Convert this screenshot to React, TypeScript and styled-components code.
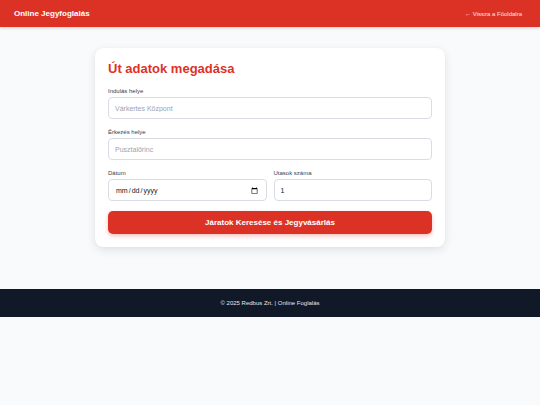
import React, { FC } from 'react';
import styled, { createGlobalStyle } from 'styled-components';

const GlobalStyle = createGlobalStyle`
  * { box-sizing: border-box; }
  body {
    margin: 0;
    background: #f9fafb;
    font-family: "Liberation Sans", Arial, sans-serif;
    color: #1f2937;
  }
`;

const RED = '#dc3226';

const Header = styled.header`
  height: 27px;
  background: ${RED};
  display: flex;
  align-items: center;
  justify-content: space-between;
  padding: 0 18px 0 14px;
  box-shadow: 0 1px 3px rgba(0, 0, 0, 0.18);
`;

const Brand = styled.div`
  color: #fff;
  font-weight: 700;
  font-size: 8px;
`;

const BackLink = styled.a`
  color: #fde2e0;
  font-size: 6px;
  text-decoration: none;
`;

const Main = styled.main`
  padding: 21px 0 42px;
`;

const Card = styled.section`
  width: 350px;
  margin: 0 auto;
  background: #fff;
  border-radius: 8px;
  padding: 13px;
  box-shadow: 0 3px 10px rgba(0, 0, 0, 0.1), 0 0 1px rgba(0, 0, 0, 0.08);
`;

const Title = styled.h1`
  margin: 0 0 11px;
  color: ${RED};
  font-size: 13px;
  line-height: 16px;
  font-weight: 700;
`;

const Field = styled.div`
  margin-bottom: 10px;
`;

const Row = styled.div`
  display: grid;
  grid-template-columns: 1fr 1fr;
  gap: 7px;
  margin-bottom: 10px;
`;

const Label = styled.label`
  display: block;
  font-size: 6px;
  line-height: 7px;
  color: #374151;
  margin-bottom: 2px;
`;

const Input = styled.input`
  display: block;
  width: 100%;
  height: 22px;
  border: 1px solid #d9dde3;
  border-radius: 4px;
  padding: 0 6px;
  font-family: "Liberation Sans", Arial, sans-serif;
  font-size: 7px;
  color: #111827;
  background: #fff;
  outline: none;
  &::placeholder { color: #9ca3af; }
`;

const Submit = styled.button`
  display: block;
  width: 100%;
  height: 23px;
  border: none;
  border-radius: 5px;
  background: ${RED};
  color: #fff;
  font-family: "Liberation Sans", Arial, sans-serif;
  font-size: 8px;
  font-weight: 700;
  box-shadow: 0 2px 4px rgba(220, 50, 38, 0.3);
  cursor: pointer;
`;

const Footer = styled.footer`
  height: 28px;
  background: #111827;
  color: #e5e7eb;
  font-size: 6px;
  display: flex;
  align-items: center;
  justify-content: center;
`;

const App: FC = () => {
  return (
    <>
      <GlobalStyle />
      <Header>
        <Brand>Online Jegyfoglalás</Brand>
        <BackLink href="#">← Vissza a Főoldalra</BackLink>
      </Header>
      <Main>
        <Card>
          <Title>Út adatok megadása</Title>
          <Field>
            <Label>Indulás helye</Label>
            <Input placeholder="Várkertes Központ" />
          </Field>
          <Field>
            <Label>Érkezés helye</Label>
            <Input placeholder="Pusztalőrinc" />
          </Field>
          <Row>
            <div>
              <Label>Dátum</Label>
              <Input type="date" />
            </div>
            <div>
              <Label>Utasok száma</Label>
              <Input type="number" defaultValue={1} min={1} />
            </div>
          </Row>
          <Submit>Járatok Keresése és Jegyvásárlás</Submit>
        </Card>
      </Main>
      <Footer>© 2025 Redbus Zrt. | Online Foglalás</Footer>
    </>
  );
};

export default App;
